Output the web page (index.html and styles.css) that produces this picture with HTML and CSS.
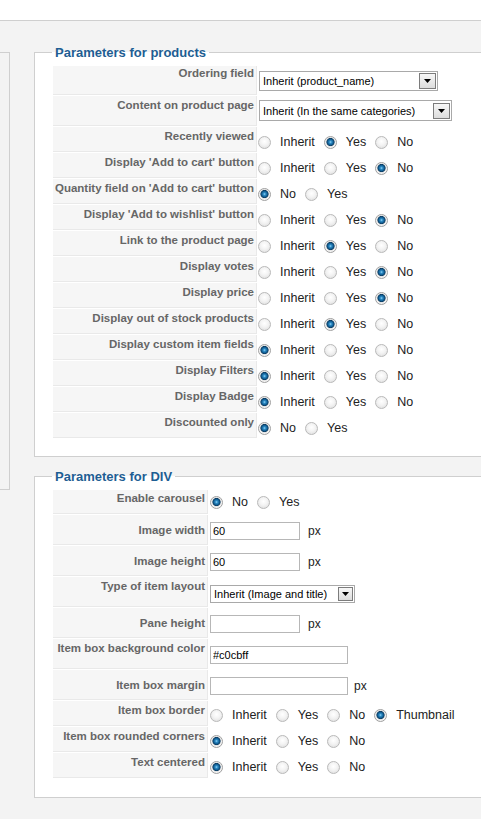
FILE: index.html
```html
<!DOCTYPE html>
<html>
<head>
<meta charset="utf-8">
<title>Parameters</title>
<link rel="stylesheet" href="styles.css">
</head>
<body>
<div class="topbar"></div>
<div class="main">
  <div class="sidebar"></div>
  <div class="content">
    <fieldset class="fs fs-products">
      <legend>Parameters for products</legend>
      <div class="params">
        <div class="row h29">
          <div class="key p1">Ordering field</div>
          <div class="val"><span class="sel sel-order"><select><option>Inherit (product_name)</option></select><span class="arrow"><svg width="7" height="4" viewBox="0 0 7 4"><path d="M0 0h7L3.5 4z"/></svg></span></span></div>
        </div>
        <div class="row h30">
          <div class="key">Content on product page</div>
          <div class="val"><span class="sel sel-content"><select><option>Inherit (In the same categories)</option></select><span class="arrow"><svg width="7" height="4" viewBox="0 0 7 4"><path d="M0 0h7L3.5 4z"/></svg></span></span></div>
        </div>
        <div class="row">
          <div class="key">Recently viewed</div>
          <div class="val"><div class="opts"><input type="radio" class="rad" name="a1"><label>Inherit</label><input type="radio" class="rad" name="a1" checked><label>Yes</label><input type="radio" class="rad" name="a1"><label>No</label></div></div>
        </div>
        <div class="row">
          <div class="key">Display 'Add to cart' button</div>
          <div class="val"><div class="opts"><input type="radio" class="rad" name="a2"><label>Inherit</label><input type="radio" class="rad" name="a2"><label>Yes</label><input type="radio" class="rad" name="a2" checked><label>No</label></div></div>
        </div>
        <div class="row">
          <div class="key">Quantity field on 'Add to cart' button</div>
          <div class="val"><div class="opts"><input type="radio" class="rad" name="a3" checked><label>No</label><input type="radio" class="rad" name="a3"><label>Yes</label></div></div>
        </div>
        <div class="row">
          <div class="key">Display 'Add to wishlist' button</div>
          <div class="val"><div class="opts"><input type="radio" class="rad" name="a4"><label>Inherit</label><input type="radio" class="rad" name="a4"><label>Yes</label><input type="radio" class="rad" name="a4" checked><label>No</label></div></div>
        </div>
        <div class="row">
          <div class="key">Link to the product page</div>
          <div class="val"><div class="opts"><input type="radio" class="rad" name="a5"><label>Inherit</label><input type="radio" class="rad" name="a5" checked><label>Yes</label><input type="radio" class="rad" name="a5"><label>No</label></div></div>
        </div>
        <div class="row">
          <div class="key">Display votes</div>
          <div class="val"><div class="opts"><input type="radio" class="rad" name="a6"><label>Inherit</label><input type="radio" class="rad" name="a6"><label>Yes</label><input type="radio" class="rad" name="a6" checked><label>No</label></div></div>
        </div>
        <div class="row">
          <div class="key">Display price</div>
          <div class="val"><div class="opts"><input type="radio" class="rad" name="a7"><label>Inherit</label><input type="radio" class="rad" name="a7"><label>Yes</label><input type="radio" class="rad" name="a7" checked><label>No</label></div></div>
        </div>
        <div class="row">
          <div class="key">Display out of stock products</div>
          <div class="val"><div class="opts"><input type="radio" class="rad" name="a8"><label>Inherit</label><input type="radio" class="rad" name="a8" checked><label>Yes</label><input type="radio" class="rad" name="a8"><label>No</label></div></div>
        </div>
        <div class="row">
          <div class="key">Display custom item fields</div>
          <div class="val"><div class="opts"><input type="radio" class="rad" name="a9" checked><label>Inherit</label><input type="radio" class="rad" name="a9"><label>Yes</label><input type="radio" class="rad" name="a9"><label>No</label></div></div>
        </div>
        <div class="row">
          <div class="key">Display Filters</div>
          <div class="val"><div class="opts"><input type="radio" class="rad" name="a10" checked><label>Inherit</label><input type="radio" class="rad" name="a10"><label>Yes</label><input type="radio" class="rad" name="a10"><label>No</label></div></div>
        </div>
        <div class="row">
          <div class="key">Display Badge</div>
          <div class="val"><div class="opts"><input type="radio" class="rad" name="a11" checked><label>Inherit</label><input type="radio" class="rad" name="a11"><label>Yes</label><input type="radio" class="rad" name="a11"><label>No</label></div></div>
        </div>
        <div class="row">
          <div class="key">Discounted only</div>
          <div class="val"><div class="opts"><input type="radio" class="rad" name="a12" checked><label>No</label><input type="radio" class="rad" name="a12"><label>Yes</label></div></div>
        </div>
      </div>
    </fieldset>

    <fieldset class="fs fs-div">
      <legend>Parameters for DIV</legend>
      <div class="params">
        <div class="row h24">
          <div class="key p2">Enable carousel</div>
          <div class="val"><div class="opts opts-top"><input type="radio" class="rad" name="b1" checked><label>No</label><input type="radio" class="rad" name="b1"><label>Yes</label></div></div>
        </div>
        <div class="row h30">
          <div class="key p9">Image width</div>
          <div class="val"><div class="field"><input type="text" class="txt txt-s" value="60"><span class="unit">px</span></div></div>
        </div>
        <div class="row h30">
          <div class="key p9">Image height</div>
          <div class="val"><div class="field"><input type="text" class="txt txt-s" value="60"><span class="unit">px</span></div></div>
        </div>
        <div class="row h30">
          <div class="key">Type of item layout</div>
          <div class="val"><span class="sel sel-layout"><select><option>Inherit (Image and title)</option></select><span class="arrow"><svg width="7" height="4" viewBox="0 0 7 4"><path d="M0 0h7L3.5 4z"/></svg></span></span></div>
        </div>
        <div class="row h30">
          <div class="key p9">Pane height</div>
          <div class="val"><div class="field"><input type="text" class="txt txt-s" value=""><span class="unit">px</span></div></div>
        </div>
        <div class="row h30">
          <div class="key">Item box background color</div>
          <div class="val"><div class="field"><input type="text" class="txt txt-l" value="#c0cbff"></div></div>
        </div>
        <div class="row h30">
          <div class="key p9">Item box margin</div>
          <div class="val"><div class="field"><input type="text" class="txt txt-l" value=""><span class="unit unit-l">px</span></div></div>
        </div>
        <div class="row">
          <div class="key">Item box border</div>
          <div class="val"><div class="opts opts-div"><input type="radio" class="rad" name="b2"><label>Inherit</label><input type="radio" class="rad" name="b2"><label>Yes</label><input type="radio" class="rad" name="b2"><label>No</label><input type="radio" class="rad" name="b2" checked><label>Thumbnail</label></div></div>
        </div>
        <div class="row">
          <div class="key">Item box rounded corners</div>
          <div class="val"><div class="opts opts-div"><input type="radio" class="rad" name="b3" checked><label>Inherit</label><input type="radio" class="rad" name="b3"><label>Yes</label><input type="radio" class="rad" name="b3"><label>No</label></div></div>
        </div>
        <div class="row">
          <div class="key">Text centered</div>
          <div class="val"><div class="opts opts-div"><input type="radio" class="rad" name="b4" checked><label>Inherit</label><input type="radio" class="rad" name="b4"><label>Yes</label><input type="radio" class="rad" name="b4"><label>No</label></div></div>
        </div>
      </div>
    </fieldset>
  </div>
</div>
</body>
</html>
```
FILE: styles.css
```css
html, body {
  margin: 0;
  padding: 0;
}
body {
  background: #f3f3f3;
  font-family: "Liberation Sans", Arial, Helvetica, sans-serif;
  overflow: hidden;
  width: 481px;
  height: 819px;
}
.topbar {
  height: 20px;
  background: #ffffff;
  border-bottom: 1px solid #cfcfcf;
}
.main {
  display: flex;
  align-items: flex-start;
}
.sidebar {
  flex: none;
  width: 9px;
  height: 436px;
  margin-top: 31px;
  border: 1px solid #cfcfcf;
  border-left: 0;
}
.content {
  flex: none;
  width: 560px;
  margin-left: 24px;
  margin-top: 24px;
}
.fs {
  margin: 0;
  padding: 6px 0 18px 18px;
  border: 1px solid #cfcfcf;
  background: #ffffff;
  min-inline-size: 0;
}
.fs-products { margin-bottom: 12px; }
.fs-div { padding-bottom: 19px; }
.fs legend {
  font-size: 13px;
  line-height: 15px;
  font-weight: bold;
  color: #1e5e93;
  padding: 0 3px;
  margin-left: -1px;
}
.params {
  display: flex;
  flex-direction: column;
  gap: 1px;
}
.row {
  display: flex;
  height: 25px;
}
.row.h29 { height: 29px; }
.row.h30 { height: 30px; }
.row.h24 { height: 24px; }
.key {
  flex: none;
  box-sizing: border-box;
  width: 204px;
  height: 100%;
  padding: 3px 2px 0 0;
  background: #f6f6f6;
  border-right: 1px solid #e9e9e9;
  border-bottom: 1px solid #e9e9e9;
  text-align: right;
  white-space: nowrap;
  font-size: 11.5px;
  line-height: 13px;
  font-weight: bold;
  color: #666666;
}
.fs-div .key { width: 155px; }
.key.p1 { padding-top: 1px; }
.key.p2 { padding-top: 2px; }
.key.p9 { padding-top: 9px; }
.val {
  flex: 1;
  margin-left: 1px;
  min-width: 0;
}
.opts {
  display: flex;
  align-items: center;
  padding-top: 9px;
}
.opts-top { padding-top: 6px; padding-left: 1px; }
.opts-div { padding-top: 8px; padding-left: 1px; }
.rad {
  -webkit-appearance: none;
  appearance: none;
  flex: none;
  box-sizing: border-box;
  width: 13px;
  height: 13px;
  margin: 0 9px 0 0;
  border-radius: 50%;
  border: 1px solid #b9b9b9;
  background: radial-gradient(circle at 50% 40%, #ffffff 0, #f3f3f3 45%, #d9d9d9 100%);
}
.rad:checked {
  border-color: #a0a0a0;
  background: radial-gradient(circle at 50% 46%, #9ad6f6 0, #2c8cc6 1.3px, #125d92 2.8px, #0b3d63 3.7px, #e0e0e0 4.4px, #f7f7f7 5.2px, #d6d6d6 100%);
}
.opts label {
  font-size: 12.5px;
  line-height: 13px;
  color: #222222;
  margin-right: 9px;
}
.sel {
  display: inline-flex;
  align-items: center;
  box-sizing: border-box;
  height: 20px;
  margin: 5px 0 0 1px;
  border: 1px solid #a9a9a9;
  background: #ffffff;
  vertical-align: top;
}
.sel-order { width: 179px; }
.sel-content { width: 193px; margin-top: 4px; height: 21px; }
.sel-layout { width: 145px; height: 18px; margin-top: 8px; }
.sel select {
  -webkit-appearance: none;
  appearance: none;
  flex: 1;
  min-width: 0;
  height: 100%;
  margin: 0;
  padding: 0 0 0 3px;
  border: 0;
  background: transparent;
  font-family: "Liberation Sans", Arial, sans-serif;
  font-size: 11px;
  color: #000000;
  outline: none;
}
.sel .arrow {
  flex: none;
  box-sizing: border-box;
  width: 17px;
  height: 16px;
  margin-right: 1px;
  display: flex;
  align-items: center;
  justify-content: center;
  border: 1px solid #7c7c7c;
  background: linear-gradient(#f7f7f7, #dcdcdc);
}
.sel-layout .arrow { height: 14px; width: 15px; }
.sel .arrow svg { display: block; fill: #000000; }
.field {
  display: flex;
  align-items: center;
  padding-top: 7px;
}
.txt {
  box-sizing: border-box;
  height: 18px;
  margin: 0 0 0 1px;
  padding: 0 2px;
  border: 1px solid #b7b7b7;
  background: #ffffff;
  font-family: "Liberation Sans", Arial, sans-serif;
  font-size: 11px;
  color: #000000;
  outline: none;
}
.txt-s { width: 90px; }
.txt-l { width: 138px; }
.unit {
  margin-left: 8px;
  font-size: 12px;
  color: #222222;
}
.unit-l { margin-left: 6px; }
```
